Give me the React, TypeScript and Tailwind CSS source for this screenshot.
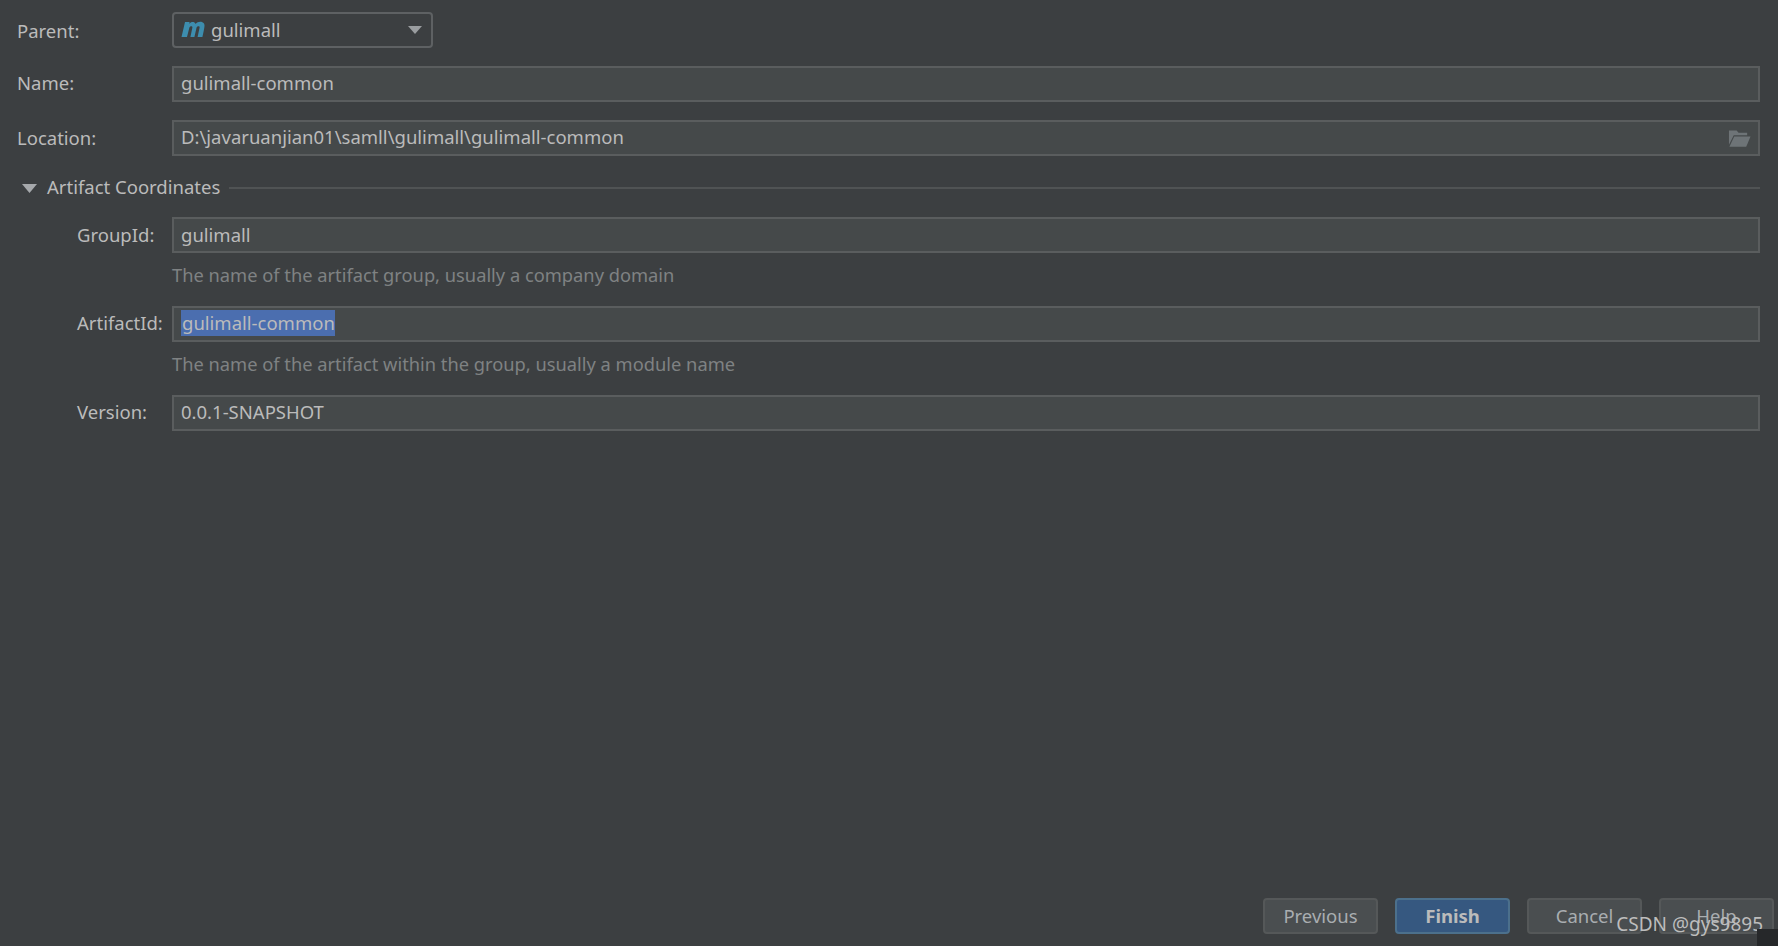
const Field = ({ children, className = "" }: { children: React.ReactNode; className?: string }) => (
  <div className={`flex-1 h-9 flex items-center pl-[7px] pr-[6px] border-2 border-[#5a5d5e] bg-[#45494a] text-[#bbbbbb] ${className}`}>
    {children}
  </div>
);

const FormRow = ({ label, indent, children, className = "", labelClass = "" }: { label: string; indent?: boolean; children: React.ReactNode; className?: string; labelClass?: string }) => (
  <div className={`flex items-center ${className}`}>
    <label className={`w-[172px] shrink-0 text-[#bbbbbb] ${indent ? "pl-[77px]" : "pl-[17px]"} ${labelClass}`}>{label}</label>
    {children}
  </div>
);

const Hint = ({ children, className = "" }: { children: React.ReactNode; className?: string }) => (
  <p className={`pl-[172px] text-[18.3px] text-[#7f8283] leading-6 ${className}`}>{children}</p>
);

const DialogButton = ({ children, primary }: { children: React.ReactNode; primary?: boolean }) => (
  <button
    className={`w-[115px] h-9 rounded-[4px] border-2 ${
      primary ? "border-[#4c708c] bg-[#365880] text-[#bbbbbb] font-bold" : "border-[#555859] bg-[#4a4e50] text-[#a9adb0]"
    }`}
  >
    {children}
  </button>
);

export default function App() {
  return (
    <div className="relative w-[1778px] h-[946px] overflow-hidden flex flex-col bg-[#3c3f41] pr-[18px] pt-3 text-[18.5px] font-['Noto_Sans','Open_Sans',sans-serif]">
      <FormRow label="Parent:" labelClass="pt-[2px]">
        <div className="w-[261px] h-9 flex items-center pl-[7px] pr-[7px] rounded-[4px] border-2 border-[#5e6163] bg-[#3c3f41] text-[#bbbbbb]">
          <svg width="24" height="18" viewBox="0 0 24 18" className="mr-[6px] -mt-[3px]">
            <path d="M0.5 17 L4 2 H8.6 L8.2 4 C10 1.6 13.4 1.4 14.6 4 C16.6 1.4 21 1 23 3.4 C24 5 23.6 7 21.4 17 H16.6 L18.6 7.6 C18.9 5.8 16.4 5.8 15.6 7.6 L13.4 17 H9.4 L11.4 7.6 C11.6 5.8 9.2 5.8 8.4 7.6 L6 17 Z" fill="#3d8dae" />
          </svg>
          <span className="flex-1">gulimall</span>
          <svg width="14" height="8" viewBox="0 0 14 8" className="mr-[2px]">
            <path d="M0 0 H14 L7 8 Z" fill="#9a9da0" />
          </svg>
        </div>
      </FormRow>
      <FormRow label="Name:" className="mt-[18px]" labelClass="pb-[2px]">
        <Field className="pb-[2px]">gulimall-common</Field>
      </FormRow>
      <FormRow label="Location:" className="mt-[18px]">
        <Field className="justify-between pb-[2px]">
          <span>D:\javaruanjian01\samll\gulimall\gulimall-common</span>
          <svg width="23" height="18" viewBox="0 0 24 18" className="mr-px mt-[3px]">
            <path d="M1 0 H9 L11 2.5 H20 V5 H6 L1 15 Z" fill="#6e7477" />
            <path d="M6.5 6.5 H23.5 L19 17 H1.5 Z" fill="#6e7477" />
          </svg>
        </Field>
      </FormRow>

      <div className="flex items-center mt-[17px] pl-[22px] h-[30px] text-[#bbbbbb]">
        <svg width="15" height="9" viewBox="0 0 15 9" className="mr-[10px]">
          <path d="M0 0 H15 L7.5 9 Z" fill="#a6a9ac" />
        </svg>
        <span className="pb-[2px]">Artifact Coordinates</span>
        <div className="flex-1 h-[2px] ml-[9px] bg-[#505354]" />
      </div>

      <FormRow label="GroupId:" indent className="mt-[14px]">
        <Field>gulimall</Field>
      </FormRow>
      <Hint className="mt-[10px]">The name of the artifact group, usually a company domain</Hint>
      <FormRow label="ArtifactId:" indent className="mt-[19px]" labelClass="pb-[2px]">
        <Field className="pl-[6px]">
          <span className="bg-[#4b6eaf] leading-[26px] pl-px -mt-[2px]">gulimall-common</span>
        </Field>
      </FormRow>
      <Hint className="mt-[10px]">The name of the artifact within the group, usually a module name</Hint>
      <FormRow label="Version:" indent className="mt-[19px]" labelClass="pb-[2px]">
        <Field className="pb-[2px]">0.0.1-SNAPSHOT</Field>
      </FormRow>

      <div className="mt-auto mb-3 -mr-[14px] flex justify-end gap-[17px]">
        <DialogButton>Previous</DialogButton>
        <DialogButton primary>Finish</DialogButton>
        <DialogButton>Cancel</DialogButton>
        <DialogButton>Help</DialogButton>
      </div>

      <div className="absolute right-[15px] bottom-[8px] text-[19px] text-[#bdbdbd]">CSDN @gys9895</div>
      <div className="absolute right-0 bottom-0 w-[21px] h-[17px] bg-[#26282a]" />
    </div>
  );
}
